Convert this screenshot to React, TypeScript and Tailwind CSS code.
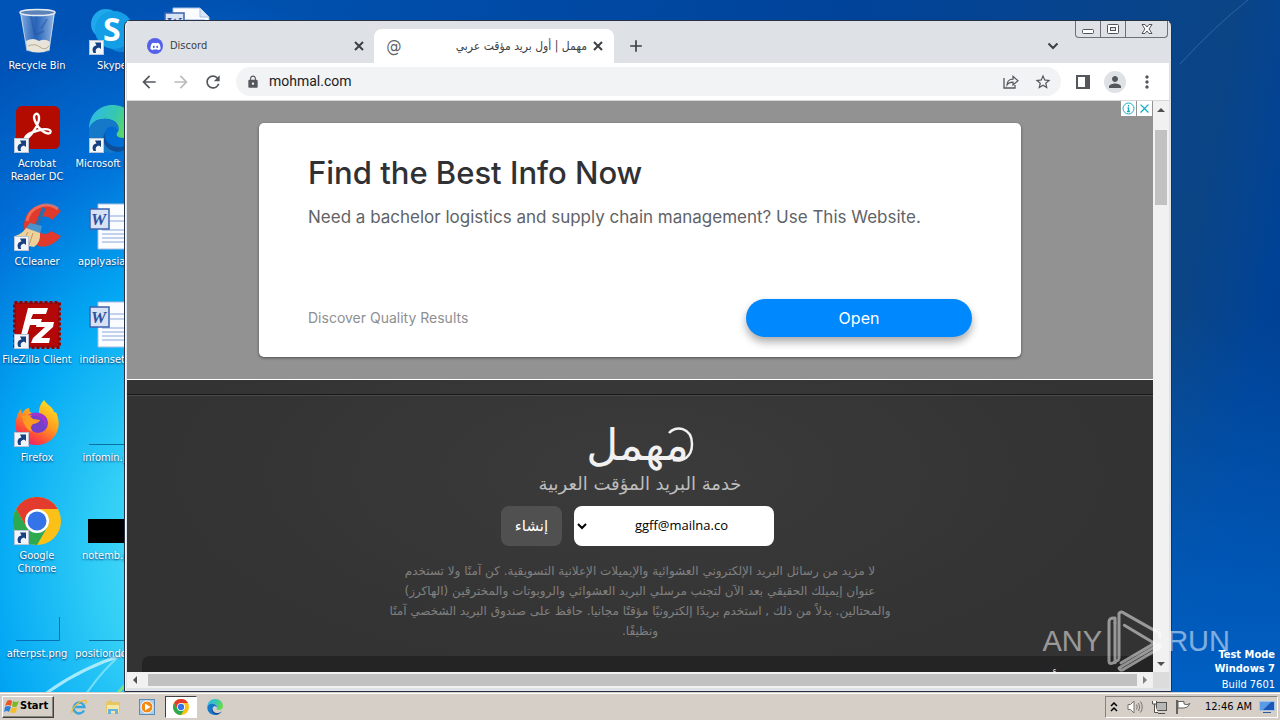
import type { ReactNode } from "react";
import {
  MdAdd,
  MdArrowBack,
  MdArrowForward,
  MdClose,
  MdLock,
  MdMoreVert,
  MdPerson,
  MdRefresh,
  MdStarBorder,
} from "react-icons/md";
import { FaDiscord } from "react-icons/fa";

function RecycleBin() {
  return (
    <svg viewBox="0 0 48 48" className="size-12">
      <defs>
        <linearGradient id="glass" x1="0" x2="1">
          <stop offset="0" stopColor="#a9c4e6" stopOpacity=".85" />
          <stop offset=".45" stopColor="#3f6fbc" stopOpacity=".6" />
          <stop offset="1" stopColor="#b9d0ee" stopOpacity=".85" />
        </linearGradient>
      </defs>
      <path d="M7 5 L42 5 L36 44 Q25 48 14 44Z" fill="url(#glass)" />
      <path d="M13 34 Q20 30 26 34 Q32 31 37 35 L36 43 Q25 48 14 43Z" fill="#e9e4da" />
      <path d="M15 39 Q22 36 27 40 T36 39" stroke="#b9a98d" fill="none" />
      <path d="M22 28 L31 24 M18 9 L22 28 M34 12 L28 22" stroke="#26559f" strokeWidth="2" opacity=".5" />
      <ellipse cx="24.500" cy="5.500" rx="17.500" ry="3" fill="#5d84b8" stroke="#e7edf5" strokeWidth="1.500" />
      <path d="M8 8 L14 44 M41 8 L36 44" stroke="#dfeaf8" opacity=".7" />
    </svg>
  );
}

function Acrobat() {
  return (
    <svg viewBox="0 0 48 48" className="size-12">
      <rect x="3" y="1" width="44" height="43" rx="6" fill="#b30b00" />
      <path
        d="M12 33 C15 36 27 19 26 12 C25 6 19 9 22 16 C25 24 33 30 37 28 C40 24 32 23 25 25.500 C19 27 13 30 12 33Z"
        fill="none"
        stroke="#fff"
        strokeWidth="2.400"
      />
    </svg>
  );
}

function CCleaner() {
  return (
    <svg viewBox="0 0 48 48" className="size-12">
      <path d="M48 8 C36 -3 13 0 11 21 C10 35 24 48 37 42 C42 40 45 37 48 33 L38 28 C32 34 24 30 24 22 C24 13 34 11 39 17Z" fill="#e2392d" />
      <path d="M45 6 C34 -2 17 3 14 18" stroke="#f4806b" strokeWidth="3" fill="none" opacity=".7" />
      <path d="M31 5 L24 22" stroke="#2f6ca8" strokeWidth="4" />
      <path d="M17 20 L29 23 L27 31 L13 25Z" fill="#4a94cd" />
      <path d="M13 25 L27 30 Q28 39 21 44 Q9 43 2 33 Q9 31 13 25Z" fill="#edd09a" />
      <path d="M15 29 L10 38 M20 30 L16 42" stroke="#c29a5b" />
    </svg>
  );
}

function FileZilla() {
  return (
    <svg viewBox="0 0 48 48" className="size-12">
      <rect x="1.500" y="1.500" width="45" height="45" fill="#b00606" stroke="#8e0505" strokeWidth="3" strokeDasharray="3 2" />
      <rect x="3" y="3" width="42" height="42" fill="#b40808" />
      <path d="M15 7 H35 L33 13 H20 L18 18 H29 L27 24 H17 L14 34 H8Z" fill="#fff" />
      <path d="M24 21 H41 L40 26 L28 37 H37 L36 42 H18 L20 37 L32 26 H23Z" fill="#fff" />
    </svg>
  );
}

function Firefox() {
  return (
    <svg viewBox="0 0 48 48" className="size-12">
      <defs>
        <linearGradient id="fox" x1=".8" y1="0" x2=".2" y2="1">
          <stop offset="0" stopColor="#ffe226" />
          <stop offset=".45" stopColor="#ff9a1f" />
          <stop offset=".75" stopColor="#ff4a3a" />
          <stop offset="1" stopColor="#e3157f" />
        </linearGradient>
      </defs>
      <path d="M31 1 C34 6 40 8 41 13 Q44 13 44 16 C49 28 43 44 26 46 C11 47 1 37 3 23 Q3 16 8 10 L9 15 Q12 9 16 9 Q16 14 21 15 Q25 16 26 14 C26 8 28 4 31 1Z" fill="url(#fox)" />
      <circle cx="25" cy="24" r="10" fill="#7440c9" />
      <path d="M15 16 Q24 10 32 18 Q35 24 32 29 Q32 20 24 17Z" fill="#a832c8" />
      <path d="M9 17 Q16 15 20 20 L27 21 Q26 24 20 25 Q16 28 20 33 Q11 31 9 17Z" fill="#ff9b20" />
    </svg>
  );
}

function Chrome({ className }: { className: string }) {
  return (
    <svg viewBox="0 0 48 48" className={className}>
      <circle cx="24" cy="24" r="24" fill="#fbc116" />
      <path d="M3.200 12 A24 24 0 0 0 24 48 L34.400 30 L24 24 L13.600 30Z" fill="#2da94f" />
      <path d="M3.200 12 L13.600 30 L24 12 H44.800 A24 24 0 0 0 3.200 12Z" fill="#e33b2e" />
      <circle cx="24" cy="24" r="12" fill="#fff" />
      <circle cx="24" cy="24" r="9.500" fill="#3474e8" />
    </svg>
  );
}

function Edge({ className, id }: { className: string; id: string }) {
  return (
    <svg viewBox="0 0 48 48" className={className}>
      <defs>
        <linearGradient id={id} x1="0" x2="1" y2=".3">
          <stop offset="0" stopColor="#2fb8ee" />
          <stop offset=".6" stopColor="#36c8ae" />
          <stop offset="1" stopColor="#67da50" />
        </linearGradient>
      </defs>
      <path d="M1 24 C1 9 12 0 24 0 C39 0 48 10 48 21 C48 29 42 33 36 33 C29 33 28 30 29 28 C33 24 30 15 20 14 C10 13 3 18 1 24Z" fill={`url(#${id})`} />
      <path d="M1 24 C3 17 10 13 19 14 C27 15 31 20 30 25 C27 20 19 20 17 27 C15 36 23 46 34 45 C18 53 0 42 1 24Z" fill="#1678c9" />
      <path d="M17 27 C15 37 24 43 33 42 C39 41 43 38 45 35 C42 42 36 46 30 47 C18 46 12 36 17 27Z" fill="#0f4f99" />
    </svg>
  );
}

function Skype() {
  return (
    <svg viewBox="0 0 48 48" className="size-12">
      <circle cx="18" cy="17" r="15" fill="#1fa9ea" />
      <circle cx="33" cy="29" r="16" fill="#0d86d8" />
      <circle cx="26" cy="23" r="19" fill="#149ee6" />
      <text x="15" y="34" fill="#fff" className="font-['Open_Sans',sans-serif] text-[32px] font-bold">S</text>
    </svg>
  );
}

function WordDoc() {
  return (
    <svg viewBox="0 0 48 48" className="size-12">
      <path d="M10 1 H37 L46 10 V46 H10Z" fill="#fafcff" stroke="#a9bfe0" />
      <path d="M37 1 V10 H46" fill="#dbe6f5" stroke="#a9bfe0" />
      <path d="M22 13 H42 M22 18 H42 M14 27 H42 M14 31 H42 M14 35 H42 M14 39 H42" stroke="#8aa7db" />
      <rect x="2" y="6" width="19" height="20" fill="#d7e2f5" stroke="#3d62b0" strokeWidth="1.500" />
      <text x="3" y="22" fill="#2c50a0" className="font-['Liberation_Serif',serif] text-[17px] font-bold italic">W</text>
    </svg>
  );
}

function Thumb({ kind }: { kind: "line" | "black" | "corner" }) {
  return (
    <svg viewBox="0 0 48 48" className="size-12">
      {kind === "black" && <rect x="0" y="22" width="48" height="24" fill="#000" />}
      {kind === "line" && <path d="M1 45.500 H48" stroke="#0a6f9d" />}
      {kind === "corner" && <path d="M3 45.500 H46.500 V22" stroke="#0a70b5" fill="none" />}
    </svg>
  );
}

function ShortcutBadge() {
  return (
    <svg viewBox="0 0 15 15" className="absolute bottom-0 left-px size-[15px]">
      <rect x=".500" y=".500" width="14" height="14" fill="#f2f5fa" stroke="#b9c4d4" />
      <path d="M4.500 13 C2.500 9 4 6 7.500 5.500 L6 2.500 H12 V9 L10 7.500 C7 8 6 10 7 13Z" fill="#16407f" />
    </svg>
  );
}

type DesktopItem = { label: string; icon: ReactNode; shortcut?: boolean };

const desktopItems: DesktopItem[] = [
  { label: "Recycle Bin", icon: <RecycleBin /> },
  { label: "Acrobat Reader DC", icon: <Acrobat />, shortcut: true },
  { label: "CCleaner", icon: <CCleaner />, shortcut: true },
  { label: "FileZilla Client", icon: <FileZilla />, shortcut: true },
  { label: "Firefox", icon: <Firefox />, shortcut: true },
  { label: "Google Chrome", icon: <Chrome className="size-12" />, shortcut: true },
  { label: "afterpst.png", icon: <Thumb kind="corner" /> },
  { label: "Skype", icon: <Skype />, shortcut: true },
  { label: "Microsoft Edge", icon: <Edge className="size-12" id="edge-desktop" />, shortcut: true },
  { label: "applyasian.rtf", icon: <WordDoc /> },
  { label: "indiansets.rtf", icon: <WordDoc /> },
  { label: "infomin.png", icon: <Thumb kind="line" /> },
  { label: "notemb.png", icon: <Thumb kind="black" /> },
  { label: "positiondo.png", icon: <Thumb kind="line" /> },
  { label: "", icon: <WordDoc /> },
];

function Desktop() {
  return (
    <ul className="relative grid auto-cols-[75px] grid-flow-col grid-rows-[repeat(7,98px)] justify-start">
      {desktopItems.map((item, i) => (
        <li key={i} className="flex flex-col items-center pt-[7px] pr-px">
          <div className="relative">
            {item.icon}
            {item.shortcut && <ShortcutBadge />}
          </div>
          <span className="mt-1 max-w-full text-center text-[11px] leading-[13px] text-white [text-shadow:0_1px_2px_#00306a]">
            {item.label}
          </span>
        </li>
      ))}
    </ul>
  );
}

function CaptionButtons() {
  return (
    <div className="mr-px flex h-[17px] rounded-b border border-t-0 border-[#6d7078]">
      <button aria-label="Minimize" className="flex w-[25px] items-center justify-center border-r border-[#6d7078]">
        <svg viewBox="0 0 12 5" className="mt-1 h-[5px] w-3">
          <rect x=".500" y=".500" width="11" height="4" rx="1" fill="#fff" stroke="#50545c" />
        </svg>
      </button>
      <button aria-label="Maximize" className="flex w-[25px] items-center justify-center border-r border-[#6d7078]">
        <svg viewBox="0 0 12 10" className="h-[10px] w-3">
          <rect x=".500" y=".500" width="11" height="9" rx="1" fill="#fff" stroke="#50545c" />
          <rect x="3.500" y="3.500" width="5" height="3" fill="#dee1e6" stroke="#50545c" />
        </svg>
      </button>
      <button aria-label="Close window" className="flex w-[41px] items-center justify-center">
        <svg viewBox="0 0 12 10" className="h-[10px] w-3">
          <path d="M1 .500 H4 L6 3 L8 .500 H11 L8 5 L11 9.500 H8 L6 7 L4 9.500 H1 L4 5Z" fill="#fff" stroke="#50545c" />
        </svg>
      </button>
    </div>
  );
}

function TabClose() {
  return (
    <svg viewBox="0 0 14 14" className="size-[14px]">
      <path d="M3 3 L11 11 M11 3 L3 11" stroke="#3c4043" strokeWidth="2" />
    </svg>
  );
}

function TabStrip() {
  return (
    <div className="flex h-[42px] items-end bg-[#dee1e6]">
      <div className="flex h-[34px] w-[247px] items-center pr-2 pl-5 text-[11px] text-[#3c4043]">
        <span className="flex size-4 items-center justify-center rounded-full bg-[#5560ea] text-white">
          <FaDiscord size={11} />
        </span>
        <span className="ml-[7px] flex-1">Discord</span>
        <button aria-label="Close Discord tab">
          <TabClose />
        </button>
      </div>
      <div className="flex h-[34px] w-[240px] items-center rounded-t-lg bg-white px-[10px] text-[#3c4043]">
        <span className="w-5 text-center text-[17px] leading-5 text-[#5f6368]">@</span>
        <span dir="rtl" className="flex-1 pr-1 text-[12px] whitespace-nowrap">
          مهمل | أول بريد مؤقت عربي
        </span>
        <button aria-label="Close tab" className="-mr-px">
          <TabClose />
        </button>
      </div>
      <button aria-label="New tab" className="ml-3 flex h-[34px] items-center text-[#3c4043]">
        <MdAdd size={20} />
      </button>
      <button aria-label="Search tabs" className="mr-4 ml-auto flex h-[34px] items-center">
        <svg viewBox="0 0 12 8" className="h-2 w-3">
          <path d="M1.500 1.500 L6 6 L10.500 1.500" fill="none" stroke="#3c4043" strokeWidth="2" />
        </svg>
      </button>
      <div className="self-start">
        <CaptionButtons />
      </div>
    </div>
  );
}

function Toolbar() {
  return (
    <div className="flex h-[38px] items-center border-b border-[#d4d6d9] bg-white pr-3 pl-3 text-[#54585d]">
      <button aria-label="Back">
        <MdArrowBack size={20} />
      </button>
      <button aria-label="Forward" className="ml-3 text-[#babcbe]">
        <MdArrowForward size={20} />
      </button>
      <button aria-label="Reload" className="ml-3">
        <MdRefresh size={20} />
      </button>
      <div className="ml-[13px] flex h-[29px] flex-1 items-center rounded-full bg-[#f1f3f4] pr-[9px] pl-[10px]">
        <MdLock size={14} />
        <input
          aria-label="Address"
          defaultValue="mohmal.com"
          className="ml-[9px] min-w-0 flex-1 bg-transparent font-['Roboto',sans-serif] text-[14px] text-[#202124] outline-none"
        />
        <button aria-label="Share">
          <svg viewBox="0 0 16 14" className="h-[14px] w-4" fill="none" stroke="currentColor">
            <path d="M1 3 V13 H12 V10" strokeWidth="1.300" />
            <path d="M4 10 C4 6 6.500 4.200 10 4.200 V1.300 L15 5.700 L10 10 V7.200 C7 7.200 5.200 8 4 10Z" strokeWidth="1.200" />
          </svg>
        </button>
        <button aria-label="Bookmark" className="ml-[15px]">
          <MdStarBorder size={18} />
        </button>
      </div>
      <button aria-label="Side panel" className="ml-[15px]">
        <svg viewBox="0 0 14 14" className="size-[14px]">
          <path d="M0 0 H14 V14 H0Z M2 2 V12 H9 V2Z" fill="currentColor" fillRule="evenodd" />
        </svg>
      </button>
      <button aria-label="Profile" className="ml-[14px] flex size-[22px] items-center justify-center rounded-full bg-[#dee1e6]">
        <MdPerson size={18} />
      </button>
      <button aria-label="Menu" className="ml-[11px]">
        <MdMoreVert size={20} />
      </button>
    </div>
  );
}

function Ad() {
  return (
    <section className="relative flex h-[279px] shrink-0 flex-col border-b border-white bg-[#929292] pt-[22px] font-['Inter',sans-serif]">
      <div className="absolute top-0 right-px flex gap-px">
        <button aria-label="Ad information" className="flex size-[15px] items-center justify-center bg-white">
          <svg viewBox="0 0 13 13" className="size-[13px]" fill="none" stroke="#12b0c4">
            <circle cx="6.500" cy="6.500" r="5.500" />
            <path d="M6.500 3 V4.500 M5.500 5.800 H6.500 V9.500 M5 9.500 H8" strokeWidth="1.300" />
          </svg>
        </button>
        <button aria-label="Close ad" className="flex size-[15px] items-center justify-center bg-white text-[#12b0c4]">
          <MdClose size={15} />
        </button>
      </div>
      <div className="mx-auto flex h-[234px] w-full max-w-[762px] flex-col rounded-[5px] bg-white px-[49px] pt-8 pb-5 shadow-[0_1px_3px_#0007]">
        <h2 className="text-[31px] leading-9 font-medium text-[#303134]">Find the Best Info Now</h2>
        <p className="mt-[14px] text-[17px] leading-6 text-[#606367]">
          Need a bachelor logistics and supply chain management? Use This Website.
        </p>
        <div className="mt-auto flex items-center justify-between">
          <span className="pb-0.5 text-[14px] text-[#8d8f92]">Discover Quality Results</span>
          <button className="h-[38px] w-[226px] rounded-full bg-[#0088ff] text-[16px] text-white shadow-[0_5px_9px_#0005]">
            Open
          </button>
        </div>
      </div>
    </section>
  );
}

const introLines = [
  "لا مزيد من رسائل البريد الإلكتروني العشوائية والإيميلات الإعلانية التسويقية. كن آمنًا ولا تستخدم",
  "عنوان إيميلك الحقيقي بعد الآن لتجنب مرسلي البريد العشوائي والروبوتات والمخترقين (الهاكرز)",
  "والمحتالين. بدلاً من ذلك , استخدم بريدًا إلكترونيًا مؤقتًا مجانيا. حافظ على صندوق البريد الشخصي آمنًا",
  "ونظيفًا.",
];

function MailService() {
  return (
    <main
      dir="rtl"
      className="flex flex-1 flex-col bg-[radial-gradient(ellipse_at_50%_30%,#3b3b3b,#333_65%)] font-['DejaVu_Sans',sans-serif]"
    >
      <div className="h-[15px] shrink-0 border-b border-[#181818]" />
      <div className="flex flex-col items-center border-t border-[#4a4a4a] pt-[29px]">
        <div className="relative flex h-[39px] items-center">
          <h1 className="pr-[5px] text-[44px] leading-[35px] font-medium text-[#f1f1f1]">مهمل</h1>
          <svg viewBox="0 0 30 38" className="absolute top-0 -right-px h-[38px] w-[30px]" fill="none" stroke="#f1f1f1" strokeWidth="2.500">
            <path d="M4 8 C10 0 27 2 27 19 C27 32 18 37 8 35" />
          </svg>
        </div>
        <p className="mt-2 text-[18px] leading-6 whitespace-nowrap text-[#bdbdbd]">خدمة البريد المؤقت العربية</p>
        <form dir="ltr" className="mt-[10px] mr-[5px] flex gap-3">
          <button type="button" className="h-10 w-[61px] rounded-lg bg-[#505050] text-[15px] text-white">
            إنشاء
          </button>
          <div className="relative">
            <select
              aria-label="البريد"
              className="h-10 w-[200px] appearance-none rounded-lg bg-white pl-[15px] text-center font-['Open_Sans',sans-serif] text-[13px] text-black [text-align-last:center]"
            >
              <option>ggff@mailna.co</option>
            </select>
            <svg viewBox="0 0 10 7" className="pointer-events-none absolute top-[17px] left-[3px] h-[7px] w-[10px]">
              <path d="M1 1 L5 5 L9 1" fill="none" stroke="#000" strokeWidth="2" />
            </svg>
          </div>
        </form>
        <p className="mt-[15px] text-center text-[12px] leading-5 text-[#808080]">
          {introLines.map((line) => (
            <span key={line} className="block whitespace-nowrap">
              {line}
            </span>
          ))}
        </p>
      </div>
      <section className="mt-[15px] mr-0 ml-[15px] flex-1 overflow-hidden rounded-tl-lg bg-[#242424] px-8 pt-3 text-[16px] leading-6 text-[#d8d8d8]">
        <p className="whitespace-nowrap">مهمل هو أول خدمة بريد إلكتروني مؤقت عربي متاح مجانًا لكل المستخدمين في العالم</p>
      </section>
    </main>
  );
}

function Arrow({ d, color }: { d: string; color: string }) {
  return (
    <svg viewBox="0 0 8 8" className="size-2">
      <path d={d} fill={color} />
    </svg>
  );
}

function BrowserWindow() {
  return (
    <div className="absolute top-5 right-[108px] bottom-0 left-[124px] flex flex-col rounded-t-md border border-[#273247] bg-[#dee1e6] px-0.5 pb-[3px] shadow-[inset_1px_1px_0_#f8f9fb]">
      <TabStrip />
      <Toolbar />
      <div className="flex min-h-0 flex-1">
        <div className="flex min-w-0 flex-1 flex-col overflow-hidden">
          <Ad />
          <MailService />
        </div>
        <div className="flex w-4 flex-col items-center bg-[#f1f1f1]">
          <div className="flex h-[17px] items-center">
            <Arrow d="M0 6 L4 2 L8 6Z" color="#505050" />
          </div>
          <div className="mt-3 h-[75px] w-3 bg-[#c1c1c1]" />
          <div className="mt-auto flex h-[17px] items-center">
            <Arrow d="M0 2 L4 6 L8 2Z" color="#505050" />
          </div>
        </div>
      </div>
      <div className="flex h-4 shrink-0 items-center bg-[#f1f1f1]">
        <div className="flex w-[21px] items-center pl-1">
          <Arrow d="M6 0 L2 4 L6 8Z" color="#505050" />
        </div>
        <div className="h-3 flex-1 bg-[#c1c1c1]" />
        <div className="flex w-4 items-center justify-center">
          <Arrow d="M2 0 L6 4 L2 8Z" color="#808080" />
        </div>
        <div className="h-4 w-4 bg-[#dcdcdc]" />
      </div>
    </div>
  );
}

function Watermark() {
  return (
    <div className="pointer-events-none absolute right-[50px] bottom-5 flex items-center gap-[5px] font-['Liberation_Sans',sans-serif] text-[29px] leading-[62px] text-white opacity-50">
      <span>ANY</span>
      <svg viewBox="448 88 165 186" className="h-[62px] w-[55px]" fill="none" stroke="#fff" strokeWidth="9" strokeLinejoin="round" strokeLinecap="round">
        <path d="M472 126 V112 Q454 110 454 124 V242 Q454 252 468 246 L482 238" />
        <path d="M484 232 V98 Q490 90 500 98 L606 158 V170" />
        <path d="M500 134 L590 188 L490 247" />
        <path d="M472 126 V246 M484 262 Q486 272 498 266 L606 202 V190 L484 262Z" />
      </svg>
      <span>RUN</span>
    </div>
  );
}

function WindowsFlag() {
  return (
    <svg viewBox="0 0 16 16" className="size-4">
      <path d="M3 2 Q6 0 8 2 L7 7 Q4 5 1 7Z" fill="#e8562a" />
      <path d="M9 2 Q12 4 15 2 L13 7 Q11 9 8 7Z" fill="#7cb728" />
      <path d="M1 8 Q4 6 7 8 L5 13 Q3 11 0 13Z" fill="#2f83d6" />
      <path d="M8 8 Q10 10 13 8 L12 13 Q9 15 6 13Z" fill="#f5bf23" />
    </svg>
  );
}

function Taskbar() {
  return (
    <footer className="flex h-7 shrink-0 items-center border-t border-[#d5cfc8] bg-[#d5cfc8] pr-0.5 pl-0.5 text-black shadow-[inset_0_1px_0_#fff]">
      <button className="flex h-[22px] w-[52px] items-center border border-t-white border-r-[#404040] border-b-[#404040] border-l-white pl-px text-[11px] font-bold shadow-[inset_-1px_-1px_0_#86827c]">
        <WindowsFlag />
        <span>Start</span>
      </button>
      <nav className="ml-2 flex items-center">
        <button aria-label="Internet Explorer" className="flex h-[22px] w-[34px] items-center justify-center">
          <svg viewBox="0 0 16 16" className="size-4" fill="none">
            <path d="M13 11.500 A5.500 5.500 0 1 1 13.500 8 H4" stroke="#37a5e0" strokeWidth="2.300" />
            <path d="M1 14 C0 9 9 1 15 1.500 C16 3 14 5 14 5" stroke="#efbd35" strokeWidth="1.300" />
          </svg>
        </button>
        <button aria-label="Explorer" className="flex h-[22px] w-[34px] items-center justify-center">
          <svg viewBox="0 0 16 16" className="size-4">
            <path d="M1 3 L6 1 L8 3 H15 V14 H1Z" fill="#e6c765" />
            <path d="M2 6 H14 V14 H2Z" fill="#f7e7a5" />
            <path d="M3 10 H13 V15 H10 V12 H6 V15 H3Z" fill="#65b3df" />
          </svg>
        </button>
        <button aria-label="Media Player" className="flex h-[22px] w-[34px] items-center justify-center">
          <svg viewBox="0 0 16 16" className="size-4">
            <rect x=".500" y=".500" width="15" height="15" fill="#a9cdea" stroke="#5b8ab5" />
            <circle cx="8" cy="8" r="6" fill="#f28a17" stroke="#fff" />
            <path d="M6 4.500 L11.500 8 L6 11.500Z" fill="#fff" />
          </svg>
        </button>
        <button
          aria-label="Chrome"
          className="ml-px flex h-[22px] w-8 items-center justify-center border border-t-[#404040] border-r-white border-b-white border-l-[#404040] bg-white"
        >
          <Chrome className="size-4" />
        </button>
        <button aria-label="Edge" className="flex h-[22px] w-9 items-center justify-center">
          <Edge className="size-4" id="edge-taskbar" />
        </button>
      </nav>
      <div className="ml-auto flex h-[22px] items-center border border-t-[#86827c] border-r-white border-b-white border-l-[#86827c] pr-0.5 pl-1">
        <button aria-label="Show hidden icons">
          <svg viewBox="0 0 8 10" className="h-[10px] w-2" fill="none" stroke="#000" strokeWidth="1.500">
            <path d="M1 4 L4 1 L7 4 M1 9 L4 6 L7 9" />
          </svg>
        </button>
        <svg viewBox="0 0 16 14" className="ml-[9px] h-[14px] w-4" fill="none" stroke="#77736d">
          <path d="M1 4.500 H3.500 L7 1 V13 L3.500 9.500 H1Z" fill="#fff" />
          <path d="M9.500 4.500 Q11 7 9.500 9.500 M11.500 3 Q14 7 11.500 11 M13.500 1.500 Q17 7 13.500 12.500" />
        </svg>
        <svg viewBox="0 0 16 14" className="ml-2 h-[14px] w-4" stroke="#55524e">
          <rect x="5.500" y="2.500" width="10" height="8" fill="#b7b7b7" />
          <path d="M7 13.500 H14 M1.500 1 V4 H5.500 V1 M3.500 4 V12.500 H7" fill="#fff" />
        </svg>
        <svg viewBox="0 0 16 14" className="ml-2 h-[14px] w-4" fill="#fff" stroke="#66625d">
          <path d="M2 0 V14" strokeWidth="2" />
          <path d="M3 1.500 H9 V4 Q12 5.500 15 3.500 Q13 8 9 8 H3Z" />
        </svg>
        <time className="ml-[14px] text-[11px] leading-4 whitespace-nowrap">12:46 AM</time>
        <svg viewBox="0 0 16 14" className="ml-[7px] h-[14px] w-4">
          <rect x=".500" y="1.500" width="15" height="9" fill="#1c56b8" stroke="#9fc3ea" />
          <path d="M1 2 H12 L4 10 H1Z" fill="#5b9be6" />
          <path d="M4 12.500 H12" stroke="#2c5a9a" />
        </svg>
      </div>
    </footer>
  );
}

export default function App() {
  return (
    <div className="flex h-screen flex-col overflow-hidden font-['DejaVu_Sans_Condensed','DejaVu_Sans',sans-serif]">
      <div className="relative min-h-0 flex-1 overflow-hidden bg-[radial-gradient(ellipse_420px_560px_at_210px_560px,#62e8f8_0%,#30cdf6_27%,#03a8f4_52%,#0077e0cc_76%,transparent_100%),linear-gradient(to_top,#0060c4_0%,transparent_55%),linear-gradient(100deg,#0054b8_0%,#0050ae_20%,#00439a_60%,#0b4586_88%,#004295_94%,#003f8f_100%)]">
        <svg className="absolute inset-0 size-full" fill="none">
          <path d="M44 695 Q80 668 126 654" stroke="#c8f5ff" strokeWidth="3" opacity=".8" />
          <path d="M86 694 Q104 668 126 650" stroke="#8ae6fa" strokeWidth="2" opacity=".8" />
          <path d="M117 694 L126 684" stroke="#7fe08a" strokeWidth="3" />
          <path d="M1180 64 Q1215 26 1248 0" stroke="#4b86c0" opacity=".5" />
        </svg>
        <Desktop />
        <div className="absolute right-[5px] bottom-0 text-right text-[11px] leading-[14px] text-white">
          <p className="font-bold">Test Mode</p>
          <p className="font-bold">Windows 7</p>
          <p className="mt-0.5">Build 7601</p>
        </div>
        <BrowserWindow />
        <Watermark />
      </div>
      <Taskbar />
    </div>
  );
}
